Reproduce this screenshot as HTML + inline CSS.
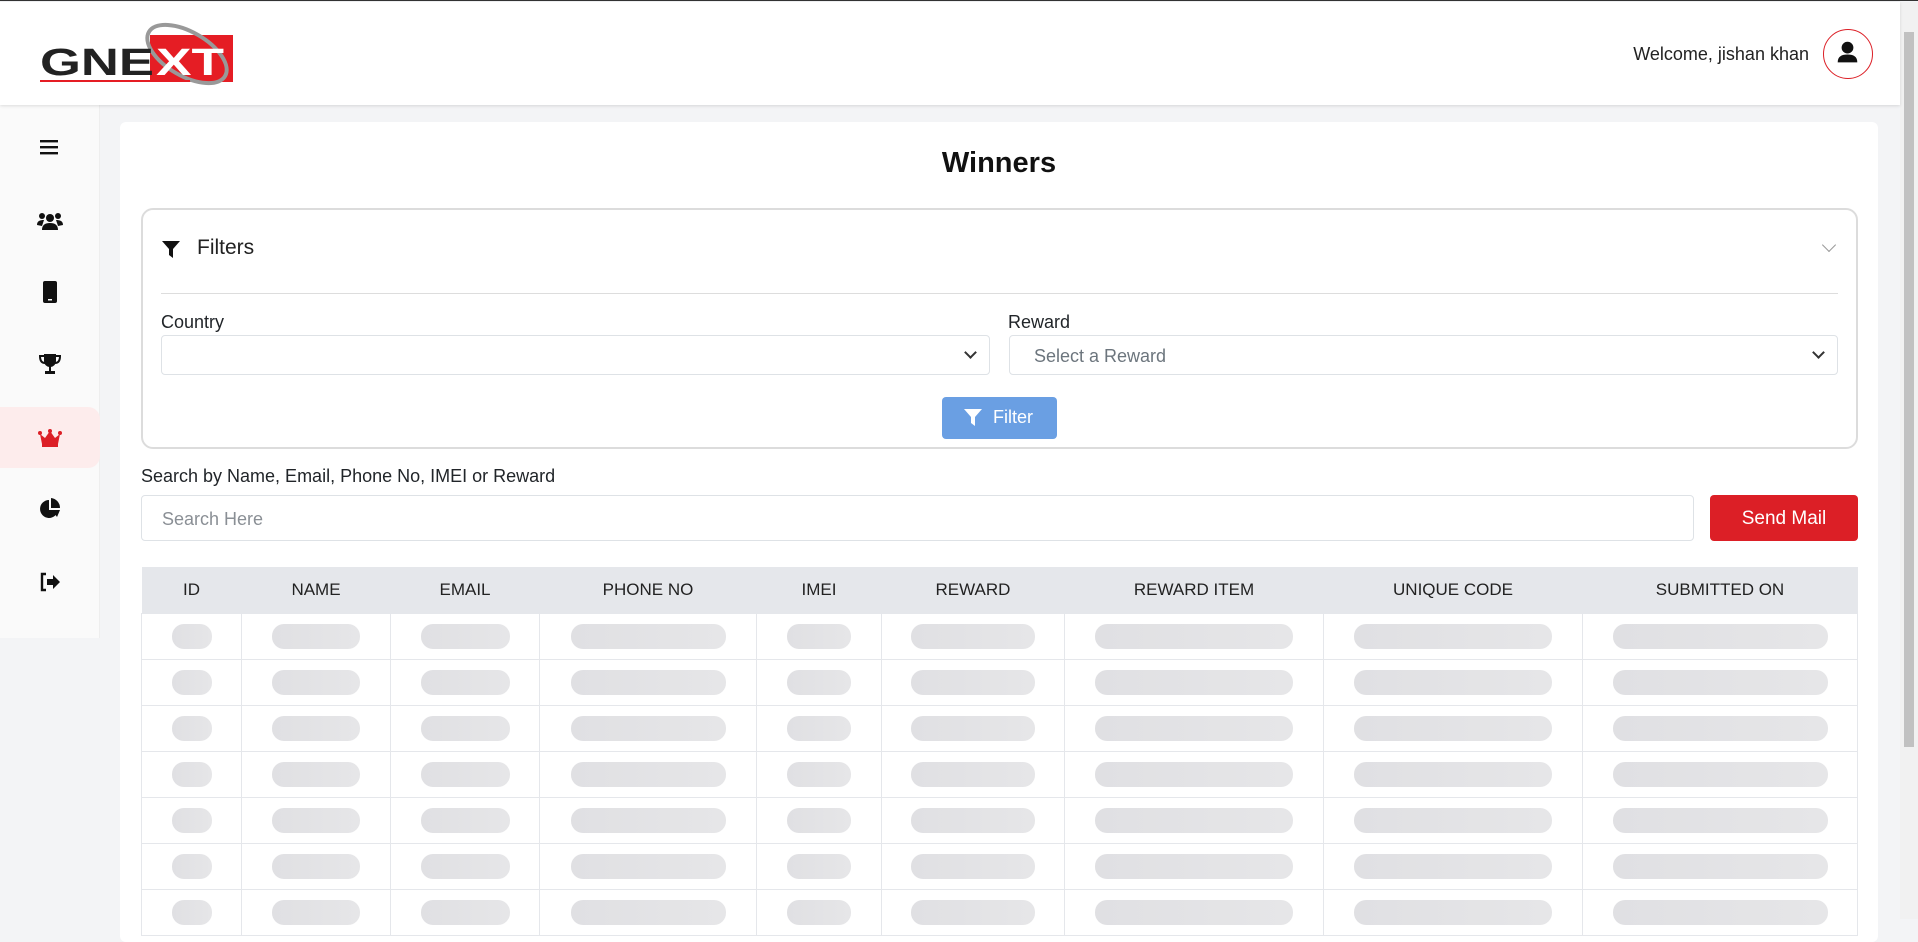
<!DOCTYPE html>
<html><head><meta charset="utf-8"><style>
*{box-sizing:border-box;margin:0;padding:0}
body{width:1918px;height:918px;overflow:hidden;font-family:"Liberation Sans",sans-serif;background:#f3f4f6;color:#212529;position:relative;border-top:1px solid #333}
.hdr{position:absolute;left:0;top:1px;width:1900px;height:103px;background:#fff;box-shadow:0 1px 3px rgba(0,0,0,.12);z-index:2}
.side{position:absolute;left:0;top:104px;width:100px;height:533px;background:#fafafa;border-right:1px solid #eee}
.ic{position:absolute;left:0;width:100px;height:30px;display:flex;align-items:center;justify-content:center}
.act{position:absolute;left:0;top:302px;width:100px;height:61px;background:#fdecec;border-radius:0 12px 12px 0}
.card{position:absolute;left:120px;top:121px;width:1758px;height:820px;background:#fff;border-radius:6px}
.abs{position:absolute}
.sel{position:absolute;height:40px;border:1px solid #dee2e6;border-radius:4px;background:#fff;font-size:18px;color:#6c757d;padding:10px 24px}
.sel:after{content:"";position:absolute;right:14px;top:12px;width:7px;height:7px;border-right:2px solid #333;border-bottom:2px solid #333;transform:rotate(45deg)}
table{position:absolute;left:21px;top:445px;width:1717px;border-collapse:collapse}
th{background:#e5e7eb;height:46px;font-weight:normal;font-size:17px;color:#222}
td{height:46px;border:1px solid #e5e7eb;text-align:center}
td i{display:inline-block;height:25px;border-radius:12px;background:linear-gradient(90deg,#e0e0e3,#e6e6e8);vertical-align:middle}
</style></head><body>
<div class="hdr">
<svg class="abs" style="left:38px;top:18px" width="200" height="68" viewBox="0 0 200 68">
<rect x="112" y="15" width="83" height="47" fill="#e51d24"/>
<ellipse cx="149" cy="34" rx="44" ry="22" transform="rotate(30 149 34)" fill="none" stroke="#999" stroke-width="4"/>
<text x="2" y="55" font-family="Liberation Sans" font-weight="bold" font-size="38" fill="#222" textLength="114" lengthAdjust="spacingAndGlyphs">GNE</text>
<text x="118" y="55" font-family="Liberation Sans" font-weight="bold" font-size="38" fill="#fff" textLength="68" lengthAdjust="spacingAndGlyphs">XT</text>
<rect x="2" y="60" width="150" height="2" fill="#e51d24"/>
</svg>
<div class="abs" style="right:91px;top:42px;font-size:18px;color:#222">Welcome, jishan khan</div>
<div class="abs" style="left:1823px;top:27px;width:50px;height:50px;border:1.5px solid #dc1f26;border-radius:50%">
<svg width="47" height="47" viewBox="0 0 48 48"><circle cx="24" cy="18" r="6" fill="#111"/><path d="M14 33c0-6 4-8 10-8s10 2 10 8z" fill="#111"/></svg></div>
</div>
<div class="side">
<div class="act"></div>
<div class="ic" style="top:27px"><svg width="20" height="16"><rect y="1" width="18" height="2.4" fill="#111"/><rect y="7" width="18" height="2.4" fill="#111"/><rect y="13" width="18" height="2.4" fill="#111"/></svg></div>
<div class="ic" style="top:101px"><svg width="26" height="20" viewBox="0 0 26 20"><circle cx="5" cy="5" r="3" fill="#111"/><circle cx="21" cy="5" r="3" fill="#111"/><circle cx="13" cy="7" r="4" fill="#111"/><path d="M0 14c0-4 3-5 7-5l-2 6zM26 14c0-4-3-5-7-5l2 6zM5 19c0-5 3-7 8-7s8 2 8 7z" fill="#111"/></svg></div>
<div class="ic" style="top:172px"><svg width="14" height="22"><rect width="14" height="22" rx="2" fill="#111"/><rect x="5" y="18" width="4" height="1.5" fill="#fff"/></svg></div>
<div class="ic" style="top:244px"><svg width="22" height="22" viewBox="0 0 22 22"><path d="M5 1h12v7a6 6 0 0 1-12 0z" fill="#111"/><path d="M5 3H1c0 5 2 7 5 7M17 3h4c0 5-2 7-5 7" fill="none" stroke="#111" stroke-width="2"/><rect x="10" y="13" width="2" height="5" fill="#111"/><rect x="6" y="18" width="10" height="3" fill="#111"/></svg></div>
<div class="ic" style="top:318px"><svg width="24" height="18" viewBox="0 0 24 18"><path d="M2 5l5 4 5-7 5 7 5-4-2 10H4z" fill="#dc1f26"/><circle cx="2" cy="4" r="2" fill="#dc1f26"/><circle cx="12" cy="2" r="2" fill="#dc1f26"/><circle cx="22" cy="4" r="2" fill="#dc1f26"/><rect x="4" y="15" width="16" height="3" fill="#dc1f26"/></svg></div>
<div class="ic" style="top:389px"><svg width="22" height="22" viewBox="0 0 22 22"><path d="M10 2a9 9 0 1 0 9 10h-9z" fill="#111"/><path d="M12 0v10h9A10 10 0 0 0 12 0z" fill="#111"/><path d="M13 12h8l-3 7z" fill="#111"/></svg></div>
<div class="ic" style="top:462px"><svg width="22" height="20" viewBox="0 0 22 20"><path d="M7 2H3v16h4" fill="none" stroke="#111" stroke-width="2.4"/><path d="M8 7h6V3l7 7-7 7v-4H8z" fill="#111"/></svg></div>
</div>
<div class="card">
<div class="abs" style="left:0;width:1758px;top:25px;text-align:center;font-size:29px;font-weight:bold;color:#111">Winners</div>
<div class="abs" style="left:21px;top:86px;width:1717px;height:241px;border:2px solid #dcdcdc;border-radius:12px">
<svg class="abs" style="left:19px;top:31px" width="18" height="18" viewBox="0 0 18 18"><path d="M0 0h18l-7 8v9l-4-3V8z" fill="#111"/></svg>
<div class="abs" style="left:54px;top:26px;font-size:21px;color:#222">Filters</div>
<div class="abs" style="right:22px;top:30px;width:10px;height:10px;border-right:1px solid #999;border-bottom:1px solid #999;transform:rotate(45deg)"></div>
<div class="abs" style="left:18px;top:83px;width:1677px;height:1px;background:#ddd"></div>
<div class="abs" style="left:18px;top:102px;font-size:18px">Country</div>
<div class="abs" style="left:865px;top:102px;font-size:18px">Reward</div>
<div class="sel" style="left:18px;top:125px;width:829px"></div>
<div class="sel" style="left:866px;top:125px;width:829px">Select a Reward</div>
<div class="abs" style="left:799px;top:187px;width:115px;height:42px;background:#6a9fe3;border-radius:4px;color:#fff;font-size:18px;padding:10px 0 0 51px">Filter
<svg class="abs" style="left:21px;top:12px" width="20" height="18" viewBox="0 0 18 18"><path d="M0 0h18l-7 8v9l-4-3V8z" fill="#fff"/></svg></div>
</div>
<div class="abs" style="left:21px;top:344px;font-size:18px">Search by Name, Email, Phone No, IMEI or Reward</div>
<div class="abs" style="left:21px;top:373px;width:1553px;height:46px;border:1px solid #dee2e6;border-radius:4px;font-size:18px;color:#8a8f95;padding:13px 20px">Search Here</div>
<div class="abs" style="left:1590px;top:373px;width:148px;height:46px;background:#dc1f26;border-radius:4px;color:#fff;font-size:19px;text-align:center;padding-top:13px">Send Mail</div>
<table>
<tr><th style="width:100px">ID</th><th style="width:149px">NAME</th><th style="width:149px">EMAIL</th><th style="width:217px">PHONE NO</th><th style="width:125px">IMEI</th><th style="width:183px">REWARD</th><th style="width:259px">REWARD ITEM</th><th style="width:259px">UNIQUE CODE</th><th>SUBMITTED ON</th></tr>
<tr><td><i style="width:40px"></i></td><td><i style="width:88px"></i></td><td><i style="width:89px"></i></td><td><i style="width:155px"></i></td><td><i style="width:64px"></i></td><td><i style="width:124px"></i></td><td><i style="width:198px"></i></td><td><i style="width:198px"></i></td><td><i style="width:215px"></i></td></tr>
<tr><td><i style="width:40px"></i></td><td><i style="width:88px"></i></td><td><i style="width:89px"></i></td><td><i style="width:155px"></i></td><td><i style="width:64px"></i></td><td><i style="width:124px"></i></td><td><i style="width:198px"></i></td><td><i style="width:198px"></i></td><td><i style="width:215px"></i></td></tr>
<tr><td><i style="width:40px"></i></td><td><i style="width:88px"></i></td><td><i style="width:89px"></i></td><td><i style="width:155px"></i></td><td><i style="width:64px"></i></td><td><i style="width:124px"></i></td><td><i style="width:198px"></i></td><td><i style="width:198px"></i></td><td><i style="width:215px"></i></td></tr>
<tr><td><i style="width:40px"></i></td><td><i style="width:88px"></i></td><td><i style="width:89px"></i></td><td><i style="width:155px"></i></td><td><i style="width:64px"></i></td><td><i style="width:124px"></i></td><td><i style="width:198px"></i></td><td><i style="width:198px"></i></td><td><i style="width:215px"></i></td></tr>
<tr><td><i style="width:40px"></i></td><td><i style="width:88px"></i></td><td><i style="width:89px"></i></td><td><i style="width:155px"></i></td><td><i style="width:64px"></i></td><td><i style="width:124px"></i></td><td><i style="width:198px"></i></td><td><i style="width:198px"></i></td><td><i style="width:215px"></i></td></tr>
<tr><td><i style="width:40px"></i></td><td><i style="width:88px"></i></td><td><i style="width:89px"></i></td><td><i style="width:155px"></i></td><td><i style="width:64px"></i></td><td><i style="width:124px"></i></td><td><i style="width:198px"></i></td><td><i style="width:198px"></i></td><td><i style="width:215px"></i></td></tr>
<tr><td><i style="width:40px"></i></td><td><i style="width:88px"></i></td><td><i style="width:89px"></i></td><td><i style="width:155px"></i></td><td><i style="width:64px"></i></td><td><i style="width:124px"></i></td><td><i style="width:198px"></i></td><td><i style="width:198px"></i></td><td><i style="width:215px"></i></td></tr>
</table>
</div>
<div class="abs" style="left:1900px;top:1px;width:18px;height:917px;background:#f1f1f1"><div style="margin:30px 0 0 4px;width:10px;height:715px;background:#c1c1c1"></div></div>
</body></html>
